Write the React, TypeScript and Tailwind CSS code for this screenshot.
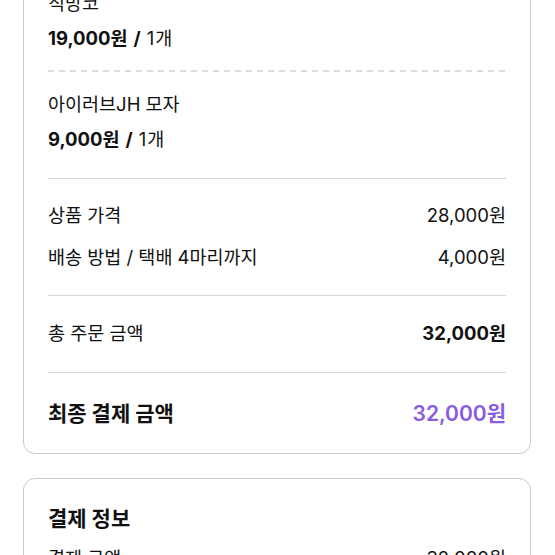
import React from "react";

const font = { fontFamily: 'Inter, "Noto Sans CJK KR", "Noto Sans", sans-serif' };

function Row({ left, right, bold }: { left: string; right: string; bold?: boolean }) {
  return (
    <div className="flex items-center justify-between h-6 text-[18.5px] leading-6 text-[#111]">
      <span>{left}</span>
      <span className={bold ? "font-bold" : ""}>{right}</span>
    </div>
  );
}

function Price({ price }: { price: string }) {
  return (
    <div className="text-[18.5px] leading-6 text-[#111]">
      <span className="font-bold">{price}</span>
      <span className="font-bold mx-[6px]">/</span>
      <span className="tracking-[1px]">1개</span>
    </div>
  );
}

export default function App() {
  return (
    <div className="w-[555px] h-[555px] overflow-hidden bg-white" style={font}>
      <div className="ml-[23px] w-[508px] -mt-[40px]">
        <div className="border border-[#c9c9c9] rounded-[12px] px-6 pt-[30px] pb-[26px]">
          <div className="flex flex-col gap-[11px]">
            <div className="text-[18.5px] leading-6 text-[#111]">직방코</div>
            <Price price="19,000원" />
          </div>
          <div className="my-[20px] h-[2px] bg-[repeating-linear-gradient(90deg,#dcdcdc_0_6px,transparent_6px_11px)]" />
          <div className="flex flex-col gap-[11px]">
            <div className="text-[18.5px] leading-6 text-[#111]">아이러브JH 모자</div>
            <Price price="9,000원" />
          </div>
          <div className="mt-[27px] mb-[24px] border-t border-[#d6d6d6]" />
          <div className="flex flex-col gap-[18px]">
            <Row left="상품 가격" right="28,000원" />
            <Row left="배송 방법 / 택배 4마리까지" right="4,000원" />
          </div>
          <div className="mt-[26px] mb-[25px] border-t border-[#d6d6d6]" />
          <Row left="총 주문 금액" right="32,000원" bold />
          <div className="mt-[27px] mb-[28px] border-t border-[#d6d6d6]" />
          <div className="flex items-center justify-between h-[26px] leading-[26px]">
            <span className="text-[21px] font-bold text-[#111]">최종 결제 금액</span>
            <span className="text-[21px] font-semibold text-[#8a5cdf]">32,000원</span>
          </div>
        </div>
        <div className="mt-[24px] border border-[#c9c9c9] rounded-[12px] px-6 pt-[27px] pb-6">
          <div className="text-[21px] font-bold leading-[26px] text-[#111]">결제 정보</div>
          <div className="mt-[14px]">
            <Row left="결제 금액" right="32,000원" />
          </div>
        </div>
      </div>
    </div>
  );
}
